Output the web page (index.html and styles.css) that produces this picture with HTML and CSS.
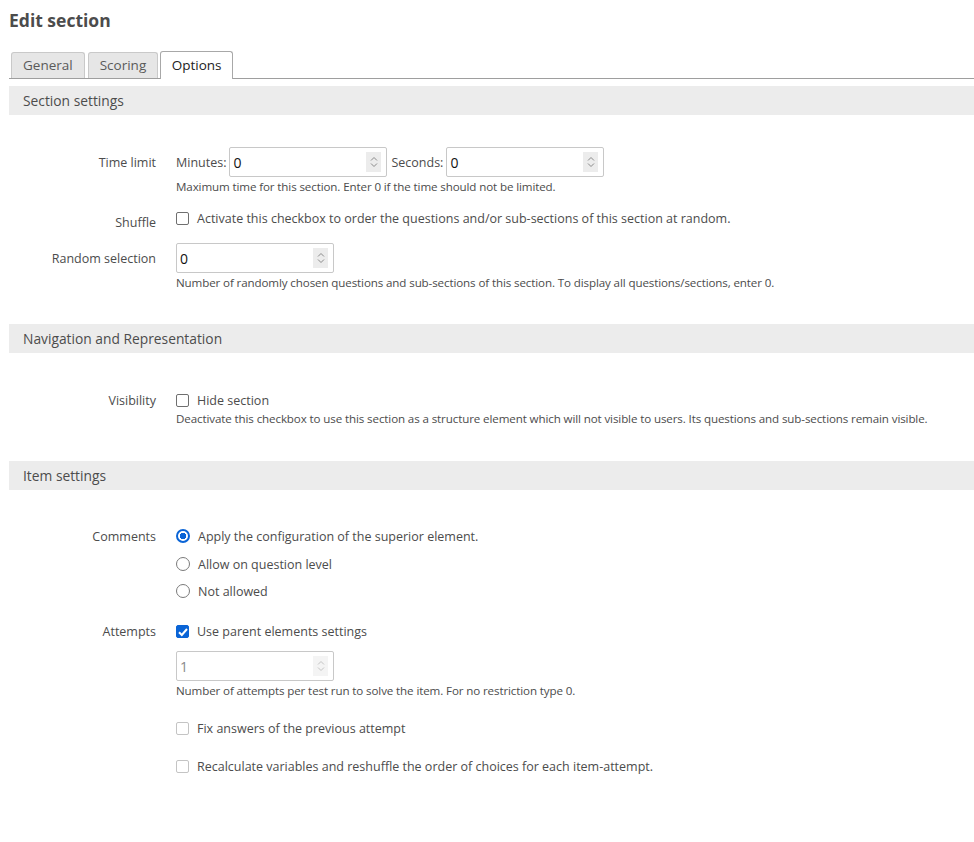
FILE: index.html
```html
<!DOCTYPE html>
<html>
<head>
<meta charset="utf-8">
<link rel="stylesheet" href="styles.css">
</head>
<body>
<div class="page">
  <h1 class="title">Edit section</h1>
  <div class="tabs">
    <div class="tab">General</div>
    <div class="tab">Scoring</div>
    <div class="tab active">Options</div>
  </div>

  <div class="sechead">Section settings</div>
  <div class="rows first">
    <div class="row">
      <div class="label lbl-input">Time limit</div>
      <div class="field">
        <div class="inline">
          <span class="pre">Minutes:</span>
          <div class="num"><span class="val">0</span><span class="spin"><svg width="10" height="14" viewBox="0 0 10 14"><path d="M2 5.5 L5 2.5 L8 5.5 M2 8.5 L5 11.5 L8 8.5" fill="none" stroke="#8a8a8a" stroke-width="1"/></svg></span></div>
          <span class="pre">Seconds:</span>
          <div class="num"><span class="val">0</span><span class="spin"><svg width="10" height="14" viewBox="0 0 10 14"><path d="M2 5.5 L5 2.5 L8 5.5 M2 8.5 L5 11.5 L8 8.5" fill="none" stroke="#8a8a8a" stroke-width="1"/></svg></span></div>
        </div>
        <div class="help">Maximum time for this section. Enter 0 if the time should not be limited.</div>
      </div>
    </div>
    <div class="row shuffle">
      <div class="label lbl-check">Shuffle</div>
      <div class="field">
        <div class="opt"><span class="cb"></span><span>Activate this checkbox to order the questions and/or sub-sections of this section at random.</span></div>
      </div>
    </div>
    <div class="row">
      <div class="label lbl-input">Random selection</div>
      <div class="field">
        <div class="num"><span class="val">0</span><span class="spin"><svg width="10" height="14" viewBox="0 0 10 14"><path d="M2 5.5 L5 2.5 L8 5.5 M2 8.5 L5 11.5 L8 8.5" fill="none" stroke="#8a8a8a" stroke-width="1"/></svg></span></div>
        <div class="help">Number of randomly chosen questions and sub-sections of this section. To display all questions/sections, enter 0.</div>
      </div>
    </div>
  </div>

  <div class="sechead">Navigation and Representation</div>
  <div class="rows nav">
    <div class="row">
      <div class="label">Visibility</div>
      <div class="field">
        <div class="opt"><span class="cb"></span><span>Hide section</span></div>
        <div class="help">Deactivate this checkbox to use this section as a structure element which will not visible to users. Its questions and sub-sections remain visible.</div>
      </div>
    </div>
  </div>

  <div class="sechead">Item settings</div>
  <div class="rows">
    <div class="row">
      <div class="label">Comments</div>
      <div class="field">
        <div class="opt"><span class="rb on"></span><span>Apply the configuration of the superior element.</span></div>
        <div class="opt radio2"><span class="rb"></span><span>Allow on question level</span></div>
        <div class="opt radio2"><span class="rb"></span><span>Not allowed</span></div>
      </div>
    </div>
    <div class="row attempts">
      <div class="label">Attempts</div>
      <div class="field">
        <div class="opt"><span class="cb on"><svg width="14" height="14" viewBox="0 0 14 14"><path d="M3 7.2 L5.8 10 L11 4" fill="none" stroke="#fff" stroke-width="2"/></svg></span><span>Use parent elements settings</span></div>
        <div class="sub">
          <div class="num disabled"><span class="val">1</span><span class="spin"><svg width="10" height="14" viewBox="0 0 10 14"><path d="M2 5.5 L5 2.5 L8 5.5 M2 8.5 L5 11.5 L8 8.5" fill="none" stroke="#c4c4c4" stroke-width="1"/></svg></span></div>
          <div class="help">Number of attempts per test run to solve the item. For no restriction type 0.</div>
          <div class="opt subopt"><span class="cb dis"></span><span>Fix answers of the previous attempt</span></div>
          <div class="opt subopt2"><span class="cb dis"></span><span>Recalculate variables and reshuffle the order of choices for each item-attempt.</span></div>
        </div>
      </div>
    </div>
  </div>
</div>
</body>
</html>
```
FILE: styles.css
```css
* { box-sizing: border-box; }
body {
  margin: 0;
  background: #fff;
  font-family: "Open Sans", "Liberation Sans", sans-serif;
  color: #4c4c4c;
  font-size: 12.5px;
}
.page { padding: 9px 0 0 9px; }
.title {
  margin: 0;
  font-size: 17.5px;
  font-weight: 700;
  color: #4c4c4c;
  line-height: 22px;
  height: 42px;
}
.tabs {
  display: flex;
  align-items: flex-end;
  gap: 3px;
  padding-left: 2px;
  border-bottom: 1px solid #9e9e9e;
  height: 28px;
}
.tab {
  height: 26px;
  padding: 0 11px;
  background: #e6e6e6;
  border: 1px solid #c9c9c9;
  border-bottom: none;
  border-radius: 3px 3px 0 0;
  font-size: 13.5px;
  line-height: 25px;
  color: #5a5a5a;
}
.tab.active {
  background: #fff;
  color: #222;
  height: 28px;
  border-color: #a8a8a8;
  margin-bottom: -1px;
  margin-left: -1px;
  line-height: 27px;
  padding: 0 10.5px;
}
.sechead {
  margin-top: 7px;
  height: 29px;
  background: #ececec;
  line-height: 29px;
  padding-left: 14px;
  font-size: 13.8px;
  color: #4c4c4c;
}
.rows { padding: 37px 0 26px; }
.rows.first { padding: 32px 0 26px; }
.rows.nav { padding: 38px 0 27px; }
.rows.nav .help { margin-top: 0; }
.row { display: flex; margin-bottom: 12px; }
.row:last-child { margin-bottom: 0; }
.row.shuffle { padding-top: 2px; margin-bottom: 10px; }
.label {
  width: 147px;
  text-align: right;
  flex: none;
  line-height: 20px;
}
.lbl-input { padding-top: 6px; }
.lbl-check { padding-top: 4px; }
.field { padding-left: 20px; }
.inline { display: flex; align-items: center; gap: 3px; }
.inline .num + .pre { margin-left: 1px; }
.num {
  width: 158px;
  height: 30px;
  border: 1px solid #c8c8c8;
  border-radius: 2px;
  display: flex;
  align-items: center;
  justify-content: space-between;
  padding: 0 5px 0 3px;
  background: #fff;
}
.val { font-size: 14px; color: #111; }
.spin {
  width: 15px;
  height: 20px;
  background: #ececec;
  display: flex;
  align-items: center;
  justify-content: center;
}
.num.disabled .val { color: #8a8a8a; }
.num.disabled .spin { background: #f4f4f4; }
.help {
  font-size: 11.6px;
  letter-spacing: -0.12px;
  line-height: 16px;
  margin-top: 2px;
  color: #4c4c4c;
}
.opt { display: flex; align-items: flex-start; gap: 8px; line-height: 20px; }
.opt .cb { margin-top: 3px; }
.opt .rb { margin-top: 2px; }
.radio2 { margin-top: 7.5px; }
.cb {
  width: 13px; height: 13px;
  border: 1.5px solid #6f6f6f;
  border-radius: 2px;
  flex: none;
  display: flex;
}
.cb.on { background: #0a64d6; border-color: #0a64d6; align-items: center; justify-content: center; }
.cb.on svg { flex: none; }
.cb.dis { border: 1px solid #c4c4c4; }
.rb {
  width: 14px; height: 14px;
  border: 1.5px solid #7a7a7a;
  border-radius: 50%;
  flex: none;
}
.rb.on { border: 2px solid #0a64d6; background: radial-gradient(circle, #0a64d6 0 3px, #fff 3.5px); }
.attempts { margin-top: 20px; }
.sub { margin-top: 9px; }
.subopt { margin-top: 20px; }
.subopt2 { margin-top: 18px; }
```
